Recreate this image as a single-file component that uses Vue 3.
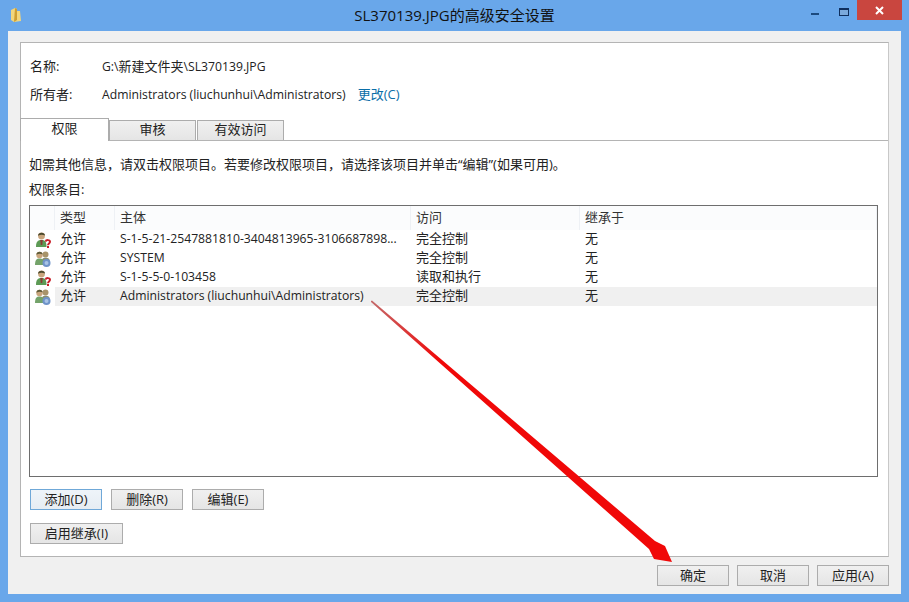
<template>
  <div class="window">
    <div class="titlebar">
      <svg class="folder" width="12" height="16" viewBox="0 0 12 16">
        <path d="M1 3 L5 1 L7 2 L7 4 L10 4 L11 14 L4 15 L1 13 Z" fill="#f2d67c" />
        <path d="M5 1 L7 2 L7 13 L4 15 Z" fill="#cf9f32" />
      </svg>
      <span class="title">SL370139.JPG的高级安全设置</span>
      <div class="controls">
        <span class="min"></span>
        <span class="max"></span>
        <span class="close">
          <svg width="9" height="9" viewBox="0 0 9 9">
            <path d="M1 1 L8 8 M8 1 L1 8" stroke="#fff" stroke-width="2" />
          </svg>
        </span>
      </div>
    </div>

    <div class="client">
      <div class="panel">
        <div class="info">
          <div class="info-row">
            <span class="info-label">名称:</span>
            <span><span class="latin">G:\</span>新建文件夹<span class="latin">\SL370139.JPG</span></span>
          </div>
          <div class="info-row">
            <span class="info-label">所有者:</span>
            <span class="latin owner">Administrators (liuchunhui\Administrators)</span>
            <a class="link">更改(C)</a>
          </div>
        </div>

        <div class="tabs">
          <div
            v-for="(tab, i) in tabs"
            :key="tab"
            class="tab"
            :class="{ active: i === 0 }"
          >{{ tab }}</div>
        </div>

        <div class="tab-body">
          <p class="hint">如需其他信息，请双击权限项目。若要修改权限项目，请选择该项目并单击“编辑”(如果可用)。</p>
          <p class="list-label">权限条目:</p>

          <div class="list">
            <div class="list-head">
              <span class="c-icon"></span>
              <span class="c-type">类型</span>
              <span class="c-name">主体</span>
              <span class="c-access">访问</span>
              <span class="c-from">继承于</span>
            </div>
            <div
              v-for="row in rows"
              :key="row.name"
              class="list-row"
              :class="{ selected: row.selected }"
            >
              <span class="c-icon">
                <svg v-if="row.unknown" width="18" height="18" viewBox="0 0 18 18">
                  <path d="M2 16 C2 10.5 4 9 7.5 9 C11 9 12.5 10.5 12.5 16 Z" fill="#5d9a55" />
                  <path d="M6.3 9 L8.7 9 L8.2 14 L6.8 14 Z" fill="#8c3b35" />
                  <circle cx="7.5" cy="5" r="3.4" fill="#c9a57c" />
                  <path d="M4 4.8 C3.8 1 11 0.6 11 4.6 C9 3.4 6 3.4 4 4.8 Z" fill="#4c4a2e" />
                  <path d="M11.6 10.6 C12 8.6 16 8.6 16 10.8 C16 12.6 14 12.4 14 14.2" fill="none" stroke="#c8202a" stroke-width="2" />
                  <rect x="13" y="15" width="2" height="2" fill="#c8202a" />
                </svg>
                <svg v-else width="18" height="18" viewBox="0 0 18 18">
                  <circle cx="11.5" cy="4.5" r="3" fill="#a8946a" />
                  <path d="M7.5 13 C7.5 9 9 7.8 11.5 7.8 C14.5 7.8 16 9 16 13 Z" fill="#8a8f70" />
                  <path d="M1 15 C1 10 2.5 8.5 5.5 8.5 C8.5 8.5 10 10 10 15 Z" fill="#74a36a" />
                  <circle cx="5.5" cy="5" r="3.2" fill="#c9a57c" />
                  <path d="M2.4 4.8 C2.2 1 8.8 0.8 8.6 4.6 C7 3.6 4.4 3.6 2.4 4.8 Z" fill="#5d5a38" />
                  <circle cx="12.5" cy="13" r="4" fill="#6f93c9" />
                  <circle cx="12.5" cy="13" r="2" fill="#a8c3e6" />
                </svg>
              </span>
              <span class="c-type">允许</span>
              <span class="c-name latin">{{ row.name }}</span>
              <span class="c-access">{{ row.access }}</span>
              <span class="c-from">无</span>
            </div>
          </div>

          <div class="btn-row">
            <button class="btn focused">添加(D)</button>
            <button class="btn">删除(R)</button>
            <button class="btn">编辑(E)</button>
          </div>
          <div class="btn-row second">
            <button class="btn wide">启用继承(I)</button>
          </div>
        </div>
      </div>

      <div class="footer">
        <button class="btn">确定</button>
        <button class="btn">取消</button>
        <button class="btn">应用(A)</button>
      </div>
    </div>

    <!-- red annotation arrow drawn over the dialog -->
    <svg class="arrow" width="909" height="602" viewBox="0 0 909 602">
      <defs>
        <linearGradient id="shaft" gradientUnits="userSpaceOnUse" x1="371" y1="301" x2="440" y2="360">
          <stop offset="0" stop-color="#c46a6a" />
          <stop offset="1" stop-color="#f00808" />
        </linearGradient>
      </defs>
      <polygon points="371,301 372,300.5 655,541 665,546 672,562 654,559 649,549 371,302" fill="url(#shaft)" />
    </svg>
  </div>
</template>

<script setup>
const tabs = ['权限', '审核', '有效访问']

const rows = [
  { name: 'S-1-5-21-2547881810-3404813965-3106687898...', access: '完全控制', unknown: true },
  { name: 'SYSTEM', access: '完全控制' },
  { name: 'S-1-5-5-0-103458', access: '读取和执行', unknown: true },
  { name: 'Administrators (liuchunhui\\Administrators)', access: '完全控制', selected: true }
]
</script>

<style>
html, body {
  margin: 0;
  overflow: hidden;
}
</style>

<style scoped>
.window {
  position: relative;
  width: 909px;
  height: 602px;
  box-sizing: border-box;
  padding: 0 8px 8px;
  background: #69a7ea;
  font-family: "Open Sans", "Noto Sans CJK SC", sans-serif;
  font-size: 13px;
  color: #222;
}

.latin {
  font-size: 12.2px;
}

.titlebar {
  display: flex;
  align-items: flex-start;
  height: 31px;
  position: relative;
}

.folder {
  margin: 7px 0 0 2px;
}

.title {
  position: absolute;
  left: 0;
  right: 0;
  top: 5px;
  text-align: center;
  font-size: 15px;
  line-height: 20px;
  color: #111;
}

.controls {
  margin-left: auto;
  margin-right: -1px;
  display: flex;
  align-items: flex-start;
  position: relative;
}

.min {
  width: 8px;
  height: 2px;
  margin-top: 13px;
  margin-right: 20px;
  background: #1c4a7e;
}

.max {
  width: 8px;
  height: 5px;
  margin-top: 8px;
  margin-right: 8px;
  border: 1px solid #0f2f5e;
  border-top-width: 2px;
  background: #7aa9dc;
}

.close {
  width: 45px;
  height: 20px;
  background: #c9463f;
  display: flex;
  align-items: center;
  justify-content: center;
}

.client {
  height: 563px;
  box-sizing: border-box;
  padding: 11px 12px 0;
  background: #f0f0f0;
}

.panel {
  height: 515px;
  box-sizing: border-box;
  background: #fff;
  border: 1px solid #b4b4b4;
  border-right-color: #c8c8c8;
}

.info {
  padding: 12px 0 0 9px;
  height: 76px;
  box-sizing: border-box;
}

.info-row {
  display: flex;
  height: 28px;
  line-height: 22px;
}

.info-label {
  width: 72px;
}

.owner {
  margin-top: 1px;
}

.link {
  margin-left: 12px;
  color: #0a6ea8;
}

.tabs {
  display: flex;
  align-items: flex-end;
  height: 22px;
  margin-top: -1px;
  border-bottom: 1px solid #b4b4b4;
}

.tab {
  width: 87px;
  height: 20px;
  box-sizing: border-box;
  border: 1px solid #acacac;
  border-bottom: none;
  margin-right: 1px;
  background: linear-gradient(#f0f0f0, #e5e5e5);
  text-align: center;
  line-height: 17px;
}

.tab.active {
  height: 23px;
  margin-bottom: -1px;
  margin-left: -1px;
  margin-right: 0;
  width: 89px;
  background: #fff;
  position: relative;
  line-height: 19px;
}

.tab-body {
  padding: 0 10px 0 8px;
}

.hint {
  margin: 13px 0 0;
  line-height: 20px;
}

.list-label {
  margin: 5px 0 0;
  line-height: 20px;
}

.list {
  margin-top: 6px;
  height: 272px;
  box-sizing: border-box;
  border: 1px solid #6e6e6e;
  background: #fff;
}

.list-head {
  display: flex;
  align-items: center;
  height: 24px;
  background: #fbfcfd;
  color: #333;
}

.list-head span {
  height: 100%;
  line-height: 23px;
  box-sizing: border-box;
  border-right: 1px solid #eef1f5;
}

.list-row {
  display: flex;
  align-items: baseline;
  height: 19px;
  line-height: 16px;
}

.list-row.selected {
  background: linear-gradient(90deg, #fff 0, #fff 25px, #f0f0f0 25px);
}

.c-icon {
  width: 25px;
  display: flex;
  align-items: center;
  align-self: center;
  padding-left: 4px;
  box-sizing: border-box;
}

.c-type {
  width: 60px;
  padding-left: 5px;
  box-sizing: border-box;
}

.c-name {
  width: 296px;
  padding-left: 5px;
  box-sizing: border-box;
  white-space: nowrap;
}

.c-access {
  width: 169px;
  padding-left: 5px;
  box-sizing: border-box;
}

.c-from {
  padding-left: 5px;
  flex: 1;
}

.btn-row {
  display: flex;
  gap: 9px;
  margin-top: 12px;
  padding-left: 1px;
}

.btn-row.second {
  margin-top: 13px;
}

.btn {
  width: 72px;
  height: 21px;
  padding: 0 0 2px;
  box-sizing: border-box;
  border: 1px solid #acacac;
  background: linear-gradient(#f0f0f0, #e5e5e5);
  font: inherit;
  color: #222;
  line-height: 18px;
}

.btn.focused {
  border-color: #6fa8d8;
  background: linear-gradient(#eef4f9, #e6edf3);
}

.btn.wide {
  width: 93px;
}

.footer {
  display: flex;
  justify-content: flex-end;
  gap: 8px;
  margin-top: 8px;
}

.arrow {
  position: absolute;
  left: 0;
  top: 0;
  pointer-events: none;
}
</style>
